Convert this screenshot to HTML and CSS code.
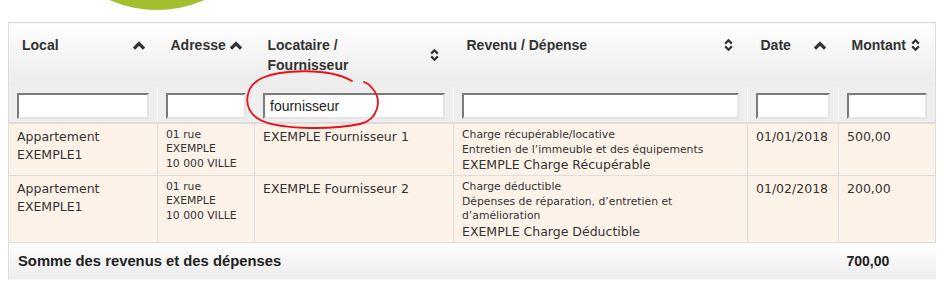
FILE: index.html
```html
<!DOCTYPE html>
<html lang="fr">
<head>
<meta charset="utf-8">
<title>Revenus et dépenses</title>
<link rel="stylesheet" href="styles.css">
</head>
<body>
<div class="brand"><div class="logo-disc"></div></div>
<table class="ledger">
  <colgroup>
    <col class="c-local"><col class="c-addr"><col class="c-loc"><col class="c-rev"><col class="c-date"><col class="c-amt">
  </colgroup>
  <thead>
    <tr class="head-row">
      <th><div class="th-in"><span>Local</span><svg class="up-ic" viewBox="0 0 14 9"><polyline points="2,7.6 7,2.6 12,7.6"/></svg></div></th>
      <th><div class="th-in"><span>Adresse</span><svg class="up-ic" viewBox="0 0 14 9"><polyline points="2,7.6 7,2.6 12,7.6"/></svg></div></th>
      <th><div class="th-in"><span>Locataire /<br>Fournisseur</span><svg class="sort-ic" viewBox="0 0 9 14"><polyline points="1.2,5.6 4.5,2.3 7.8,5.6"/><polyline points="1.2,8.4 4.5,11.7 7.8,8.4"/></svg></div></th>
      <th><div class="th-in"><span>Revenu / Dépense</span><svg class="sort-ic" viewBox="0 0 9 14"><polyline points="1.2,5.6 4.5,2.3 7.8,5.6"/><polyline points="1.2,8.4 4.5,11.7 7.8,8.4"/></svg></div></th>
      <th><div class="th-in"><span>Date</span><svg class="up-ic" viewBox="0 0 14 9"><polyline points="2,7.6 7,2.6 12,7.6"/></svg></div></th>
      <th><div class="th-in"><span>Montant</span><svg class="sort-ic" viewBox="0 0 9 14"><polyline points="1.2,5.6 4.5,2.3 7.8,5.6"/><polyline points="1.2,8.4 4.5,11.7 7.8,8.4"/></svg></div></th>
    </tr>
    <tr class="filter-row">
      <td><input class="filter" type="text"></td>
      <td><input class="filter" type="text"></td>
      <td><input class="filter" type="text" value="fournisseur"></td>
      <td><input class="filter" type="text"></td>
      <td><input class="filter" type="text"></td>
      <td><input class="filter" type="text"></td>
    </tr>
  </thead>
  <tbody>
    <tr class="data-row">
      <td>Appartement<br>EXEMPLE1</td>
      <td class="addr">01 rue<br>EXEMPLE<br>10 000 VILLE</td>
      <td>EXEMPLE Fournisseur 1</td>
      <td><div class="small">Charge récupérable/locative</div><div class="small">Entretien de l’immeuble et des équipements</div><div class="rev-main">EXEMPLE Charge Récupérable</div></td>
      <td>01/01/2018</td>
      <td>500,00</td>
    </tr>
    <tr class="data-row">
      <td>Appartement<br>EXEMPLE1</td>
      <td class="addr">01 rue<br>EXEMPLE<br>10 000 VILLE</td>
      <td>EXEMPLE Fournisseur 2</td>
      <td><div class="small">Charge déductible</div><div class="small">Dépenses de réparation, d’entretien et d’amélioration</div><div class="rev-main">EXEMPLE Charge Déductible</div></td>
      <td>01/02/2018</td>
      <td>200,00</td>
    </tr>
  </tbody>
  <tfoot>
    <tr class="sum-row">
      <td colspan="5" class="sum-label">Somme des revenus et des dépenses</td>
      <td class="sum-val">700,00</td>
    </tr>
  </tfoot>
</table>
<svg class="annot" viewBox="0 0 945 304" width="945" height="304">
  <path d="M352 81 C 330 68, 282 69, 262 78 C 245 86, 242 107, 257 118 C 274 130, 330 130, 360 124 C 378 120, 383 100, 372 88 C 370 85, 367 83, 364 82"/>
</svg>
</body>
</html>
```
FILE: styles.css
```css
html, body {
  margin: 0;
  padding: 0;
  background: #fff;
}
body {
  position: relative;
  padding: 0 10px 0 8px;
  font-family: "DejaVu Sans", Verdana, sans-serif;
  color: #333;
}
.brand {
  position: relative;
  height: 22px;
  overflow: hidden;
}
.logo-disc {
  position: absolute;
  left: 31px;
  top: -226px;
  width: 236px;
  height: 236px;
  border-radius: 50%;
  background: #a3bf2f;
}
.ledger {
  width: 927px;
  border-collapse: collapse;
  table-layout: fixed;
}
.c-local { width: 149px; }
.c-addr { width: 97px; }
.c-loc { width: 199px; }
.c-rev { width: 294px; }
.c-date { width: 91px; }
.c-amt { width: 97px; }

.head-row th {
  background: linear-gradient(#fefefe, #ebebeb);
  border-top: 1px solid #ddd;
  padding: 12px 12px 12px 13px;
  font-family: "Liberation Sans", Arial, sans-serif;
  font-weight: bold;
  font-size: 14px;
  line-height: 20px;
  color: #333;
  text-align: left;
  vertical-align: top;
}
.head-row th:first-child { border-left: 1px solid #ddd; }
.head-row th:last-child { border-right: 1px solid #ddd; }
.th-in {
  display: flex;
  align-items: center;
  justify-content: space-between;
  gap: 1px;
}
.up-ic {
  width: 14px;
  height: 9px;
  flex-shrink: 0;
  fill: none;
  stroke: #333;
  stroke-width: 3.2;
  stroke-linejoin: miter;
}
.sort-ic {
  width: 9px;
  height: 14px;
  flex-shrink: 0;
  margin-right: 3px;
  fill: none;
  stroke: #333;
  stroke-width: 2.2;
  stroke-linejoin: miter;
}

.filter-row td {
  background: #eee;
  padding: 6px 8px 3px;
  border-left: 1px solid #f8f8f8;
  border-bottom: 2px solid #ddd;
}
.filter-row td:first-child { border-left: 1px solid #ddd; }
.filter-row td:last-child { border-right: 1px solid #ddd; }
.filter {
  display: block;
  box-sizing: border-box;
  width: 100%;
  height: 26px;
  margin: 0;
  padding: 0 5px;
  border-style: solid;
  border-width: 2px;
  border-color: #7b7b7b #e4e4e4 #e4e4e4 #7b7b7b;
  background: #fff;
  font-family: "Liberation Sans", Arial, sans-serif;
  font-size: 14px;
  color: #222;
  outline: none;
}

.data-row td {
  background: #fdf2e8;
  border: 1px solid #ddd;
  padding: 4px 8px 2px;
  vertical-align: top;
  font-size: 12.5px;
  line-height: 18px;
  color: #333;
}
.data-row td.addr {
  font-size: 10.8px;
  line-height: 14.3px;
}
.small {
  font-size: 10.8px;
  line-height: 14.5px;
}
.rev-main {
  font-size: 12.5px;
  line-height: 16px;
}

.sum-row td {
  background: linear-gradient(#fff, #ececec);
  font-family: "Liberation Sans", Arial, sans-serif;
  font-weight: bold;
  line-height: 20px;
  color: #222;
  padding: 8px 8px 9px;
}
.sum-label {
  font-size: 14.8px;
  border-left: 1px solid #ddd;
  padding-left: 9px !important;
}
.sum-val {
  font-size: 14px;
}

.annot {
  position: absolute;
  left: 0;
  top: 0;
  pointer-events: none;
  fill: none;
  stroke: #e8101a;
  stroke-width: 1.8;
  stroke-linecap: round;
}
```
